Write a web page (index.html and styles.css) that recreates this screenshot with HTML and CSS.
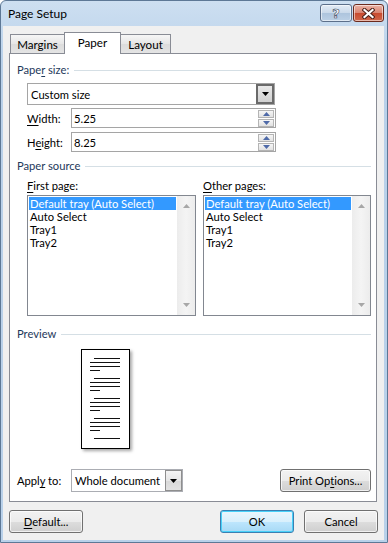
FILE: index.html
```html
<!doctype html>
<html>

<head>
	<title>Page Setup</title>
	<link rel="stylesheet" href="styles.css">
</head>

<body>
	<div class="window">
		<div class="titlebar">
			<span class="title">Page Setup</span>
			<div class="capBtns">
				<div class="cap help"><span>?</span></div>
				<div class="cap close">
					<svg width="13" height="11" viewBox="0 0 13 11">
						<path d="M2.5 2 L10.5 9 M10.5 2 L2.5 9" stroke="#4a2018" stroke-width="4.2" stroke-linecap="square" fill="none" />
						<path d="M2.5 2 L10.5 9 M10.5 2 L2.5 9" stroke="#fff" stroke-width="2.2" stroke-linecap="square" fill="none" />
					</svg>
				</div>
			</div>
		</div>

		<div class="client">
			<div class="tabs">
				<div class="tab margins">Margins</div>
				<div class="tab active paper">Paper</div>
				<div class="tab layout">Layout</div>
			</div>

			<div class="panel">
				<div class="group"><span>Pape<u>r</u> size:</span></div>
				<div class="combo sizeCombo">
					<span class="value">Custom size</span>
					<div class="drop pressed">
						<svg width="7" height="4" viewBox="0 0 7 4"><path d="M0 0 H7 L3.5 4 Z" fill="#000" /></svg>
					</div>
				</div>
				<div class="field">
					<label><u>W</u>idth:</label>
					<div class="spin">
						<span class="value">5.25</span>
						<div class="spinBtns">
							<div class="sb"><svg width="7" height="4" viewBox="0 0 7 4"><path d="M0 4 H7 L3.5 0 Z" fill="#4f6aa8" /></svg></div>
							<div class="sb"><svg width="7" height="4" viewBox="0 0 7 4"><path d="M0 0 H7 L3.5 4 Z" fill="#4f6aa8" /></svg></div>
						</div>
					</div>
				</div>
				<div class="field">
					<label>H<u>e</u>ight:</label>
					<div class="spin">
						<span class="value">8.25</span>
						<div class="spinBtns">
							<div class="sb"><svg width="7" height="4" viewBox="0 0 7 4"><path d="M0 4 H7 L3.5 0 Z" fill="#4f6aa8" /></svg></div>
							<div class="sb"><svg width="7" height="4" viewBox="0 0 7 4"><path d="M0 0 H7 L3.5 4 Z" fill="#4f6aa8" /></svg></div>
						</div>
					</div>
				</div>

				<div class="group source"><span>Paper source</span></div>
				<div class="lists">
					<div class="listCol first">
						<div class="listLabel"><u>F</u>irst page:</div>
						<div class="listbox">
							<div class="items">
								<div class="item sel">Default tray (Auto Select)</div>
								<div class="item">Auto Select</div>
								<div class="item">Tray1</div>
								<div class="item">Tray2</div>
							</div>
							<div class="scroll">
								<svg width="7" height="4" viewBox="0 0 7 4"><path d="M0 4 H7 L3.5 0 Z" fill="#a7a7a7" /></svg>
								<svg width="7" height="4" viewBox="0 0 7 4"><path d="M0 0 H7 L3.5 4 Z" fill="#a7a7a7" /></svg>
							</div>
						</div>
					</div>
					<div class="listCol other">
						<div class="listLabel"><u>O</u>ther pages:</div>
						<div class="listbox">
							<div class="items">
								<div class="item sel">Default tray (Auto Select)</div>
								<div class="item">Auto Select</div>
								<div class="item">Tray1</div>
								<div class="item">Tray2</div>
							</div>
							<div class="scroll">
								<svg width="7" height="4" viewBox="0 0 7 4"><path d="M0 4 H7 L3.5 0 Z" fill="#a7a7a7" /></svg>
								<svg width="7" height="4" viewBox="0 0 7 4"><path d="M0 0 H7 L3.5 4 Z" fill="#a7a7a7" /></svg>
							</div>
						</div>
					</div>
				</div>

				<div class="group preview"><span>Preview</span></div>
				<div class="page">
					<svg width="47" height="98" viewBox="0 0 47 98">
						<g stroke="#111" stroke-width="1" shape-rendering="crispEdges">
							<path d="M12 8.5 H38 M8 12.5 H38 M8 16.5 H38 M8 20.5 H18" />
							<path d="M12 28.5 H38 M8 32.5 H38 M8 36.5 H38 M8 40.5 H18" />
							<path d="M12 48.5 H38 M8 52.5 H38 M8 56.5 H38 M8 60.5 H18" />
							<path d="M12 68.5 H38 M8 72.5 H38 M8 76.5 H38 M8 80.5 H18" />
							<path d="M12 88.5 H38" />
						</g>
					</svg>
				</div>

				<div class="applyRow">
					<span class="applyLabel">Appl<u>y</u> to:</span>
					<div class="combo applyCombo">
						<span class="value">Whole document</span>
						<div class="drop">
							<svg width="7" height="4" viewBox="0 0 7 4"><path d="M0 0 H7 L3.5 4 Z" fill="#000" /></svg>
						</div>
					</div>
					<div class="btn printBtn">Print Op<u>t</u>ions...</div>
				</div>
			</div>

			<div class="footer">
				<div class="btn"><u>D</u>efault...</div>
				<div class="btn ok">OK</div>
				<div class="btn">Cancel</div>
			</div>
		</div>
	</div>
</body>

</html>
```

FILE: styles.css
```css
* {
	box-sizing: border-box;
}

body {
	margin: 0;
	font-family: Lato, 'Open Sans', sans-serif;
	font-size: 11.2px;
	color: #000;
}

u {
	text-decoration-thickness: 1px;
	text-underline-offset: 2px;
}

.window {
	width: 388px;
	height: 543px;
	display: flex;
	flex-direction: column;
	border: 1px solid #5d7896;
	border-radius: 6px 6px 0 0;
	background: linear-gradient(#cddff1, #b9d1ea 60px, #b9d1ea);
	padding: 0 3px 2px 2px;
}

.titlebar {
	height: 25px;
	display: flex;
	align-items: flex-start;
	justify-content: space-between;
}

.title {
	font-size: 12px;
	padding-left: 5px;
	line-height: 25px;
}

.capBtns {
	display: flex;
	gap: 1px;
	margin-top: 3px;
}

.cap {
	width: 32px;
	height: 18px;
	border: 1px solid #5c6f8a;
	border-radius: 3px;
	display: flex;
	align-items: center;
	justify-content: center;
	box-shadow: inset 0 0 0 1px rgba(255, 255, 255, 0.55);
}

.help {
	background: linear-gradient(#e4ecf6, #c9d8ea 50%, #adc4dd 51%, #bcd0e6);
}

.help span {
	font-family: 'DejaVu Sans', sans-serif;
	font-weight: bold;
	font-size: 13px;
	line-height: 1;
	color: #fff;
	-webkit-text-stroke: 0.6px #3a4a60;
}

.close {
	width: 31px;
	border-color: #6b2a1d;
	background: linear-gradient(#eab3a6, #d98370 50%, #c84a2e 51%, #d0684c);
}

.client {
	flex: 1;
	background: #f0f0f0;
	padding-top: 6px;
	display: flex;
	flex-direction: column;
}

.tabs {
	display: flex;
	align-items: flex-end;
	height: 21px;
	padding-left: 7px;
}

.tab {
	height: 19px;
	border: 1px solid #898c95;
	border-bottom: none;
	background: linear-gradient(#f6f6f6, #e6e6e6 50%, #dcdcdc 51%, #e4e4e4);
	text-align: center;
	line-height: 19px;
	font-size: 11.6px;
}

.margins {
	width: 54px;
	border-right: none;
}

.paper {
	width: 57px;
}

.layout {
	width: 50px;
	border-left: none;
}

.tab.active {
	height: 22px;
	margin-bottom: -1px;
	background: #fff;
	line-height: 19px;
	position: relative;
	z-index: 1;
}

.panel {
	margin-left: 6px;
	width: 368px;
	height: 449px;
	border: 1px solid #898c95;
	background: #fff;
	padding: 9px 5px 0 7px;
	display: flex;
	flex-direction: column;
}

.group {
	display: flex;
	align-items: center;
	gap: 5px;
	height: 14px;
	line-height: 14px;
	color: #1e395b;
}

.group::after {
	content: '';
	flex: 1;
	height: 1px;
	background: #d5dfe5;
}

.combo,
.spin {
	display: flex;
	align-items: center;
	border: 1px solid #a5a5a5;
	background: #fff;
}

.value {
	flex: 1;
	padding-left: 3px;
	white-space: nowrap;
	overflow: hidden;
}

.sizeCombo {
	margin: 6px 0 0 10px;
	width: 248px;
	height: 22px;
}

.drop {
	width: 17px;
	height: 20px;
	border: 1px solid #8e8e8e;
	background: linear-gradient(#f4f4f4, #e6e6e6 50%, #d8d8d8 51%, #e2e2e2);
	display: flex;
	align-items: center;
	justify-content: center;
	flex-shrink: 0;
}

.drop.pressed {
	border: 2px solid #6a6a6a;
	width: 18px;
	background: linear-gradient(#e8e8e8, #d0d0d0);
}

.field {
	display: flex;
	align-items: center;
	margin: 3px 0 0 10px;
	height: 20px;
}

.field+.field {
	margin-top: 4px;
}

.field label {
	width: 44px;
}

.spin {
	width: 205px;
	height: 20px;
}

.spin .value {
	padding-left: 2px;
}

.spinBtns {
	display: flex;
	flex-direction: column;
	gap: 1px;
	margin-right: 1px;
}

.sb {
	width: 16px;
	height: 8px;
	border: 1px solid #b4b4b4;
	background: linear-gradient(#f6f6f6, #e2e2e2);
	display: flex;
	align-items: center;
	justify-content: center;
}

.source {
	margin-top: 7px;
}

.lists {
	display: flex;
	gap: 7px;
	margin: 6px 0 0 10px;
}

.first {
	width: 169px;
}

.other {
	width: 168px;
}

.listLabel {
	height: 14px;
	line-height: 14px;
	margin-bottom: 2px;
}

.listbox {
	height: 121px;
	border: 1px solid #828790;
	display: flex;
	background: #fff;
}

.items {
	flex: 1;
	padding: 1px;
}

.item {
	height: 13px;
	line-height: 13px;
	padding-left: 1px;
	white-space: nowrap;
}

.item.sel {
	background: #3399ff;
	color: #fff;
}

.scroll {
	width: 18px;
	background: linear-gradient(90deg, #ececec, #f4f4f4 50%, #ececec);
	display: flex;
	flex-direction: column;
	justify-content: space-between;
	align-items: center;
	padding: 8px 0 8px;
}

.preview {
	margin-top: 11px;
}

.page {
	margin: 8px 0 0 64px;
	width: 49px;
	height: 100px;
	border: 1px solid #000;
	background: #fff;
	box-shadow: 2px 2px 3px rgba(0, 0, 0, 0.35);
}

.page svg {
	display: block;
}

.applyRow {
	display: flex;
	align-items: center;
	margin-top: 20px;
	height: 23px;
}

.applyLabel {
	width: 54px;
}

.applyCombo {
	width: 112px;
	height: 23px;
	border-color: #abadb3;
}

.applyCombo .drop {
	height: 21px;
}

.btn {
	width: 74px;
	height: 23px;
	border: 1px solid #707070;
	border-radius: 3px;
	background: linear-gradient(#f2f2f2, #ebebeb 50%, #dddddd 51%, #cfcfcf);
	box-shadow: inset 0 0 0 1px rgba(255, 255, 255, 0.7);
	display: flex;
	align-items: center;
	justify-content: center;
}

.printBtn {
	width: 91px;
	margin-left: auto;
}

.footer {
	display: flex;
	gap: 10px;
	margin: 8px 0 0 6px;
	width: 369px;
}

.footer .btn:first-child {
	margin-right: auto;
}

.ok {
	border-color: #3c7fb1;
	background: linear-gradient(#eaf6fd, #d9f0fc 50%, #bee6fd 51%, #a7d9f5);
	box-shadow: inset 0 0 0 1px #48d1f9;
}
```
